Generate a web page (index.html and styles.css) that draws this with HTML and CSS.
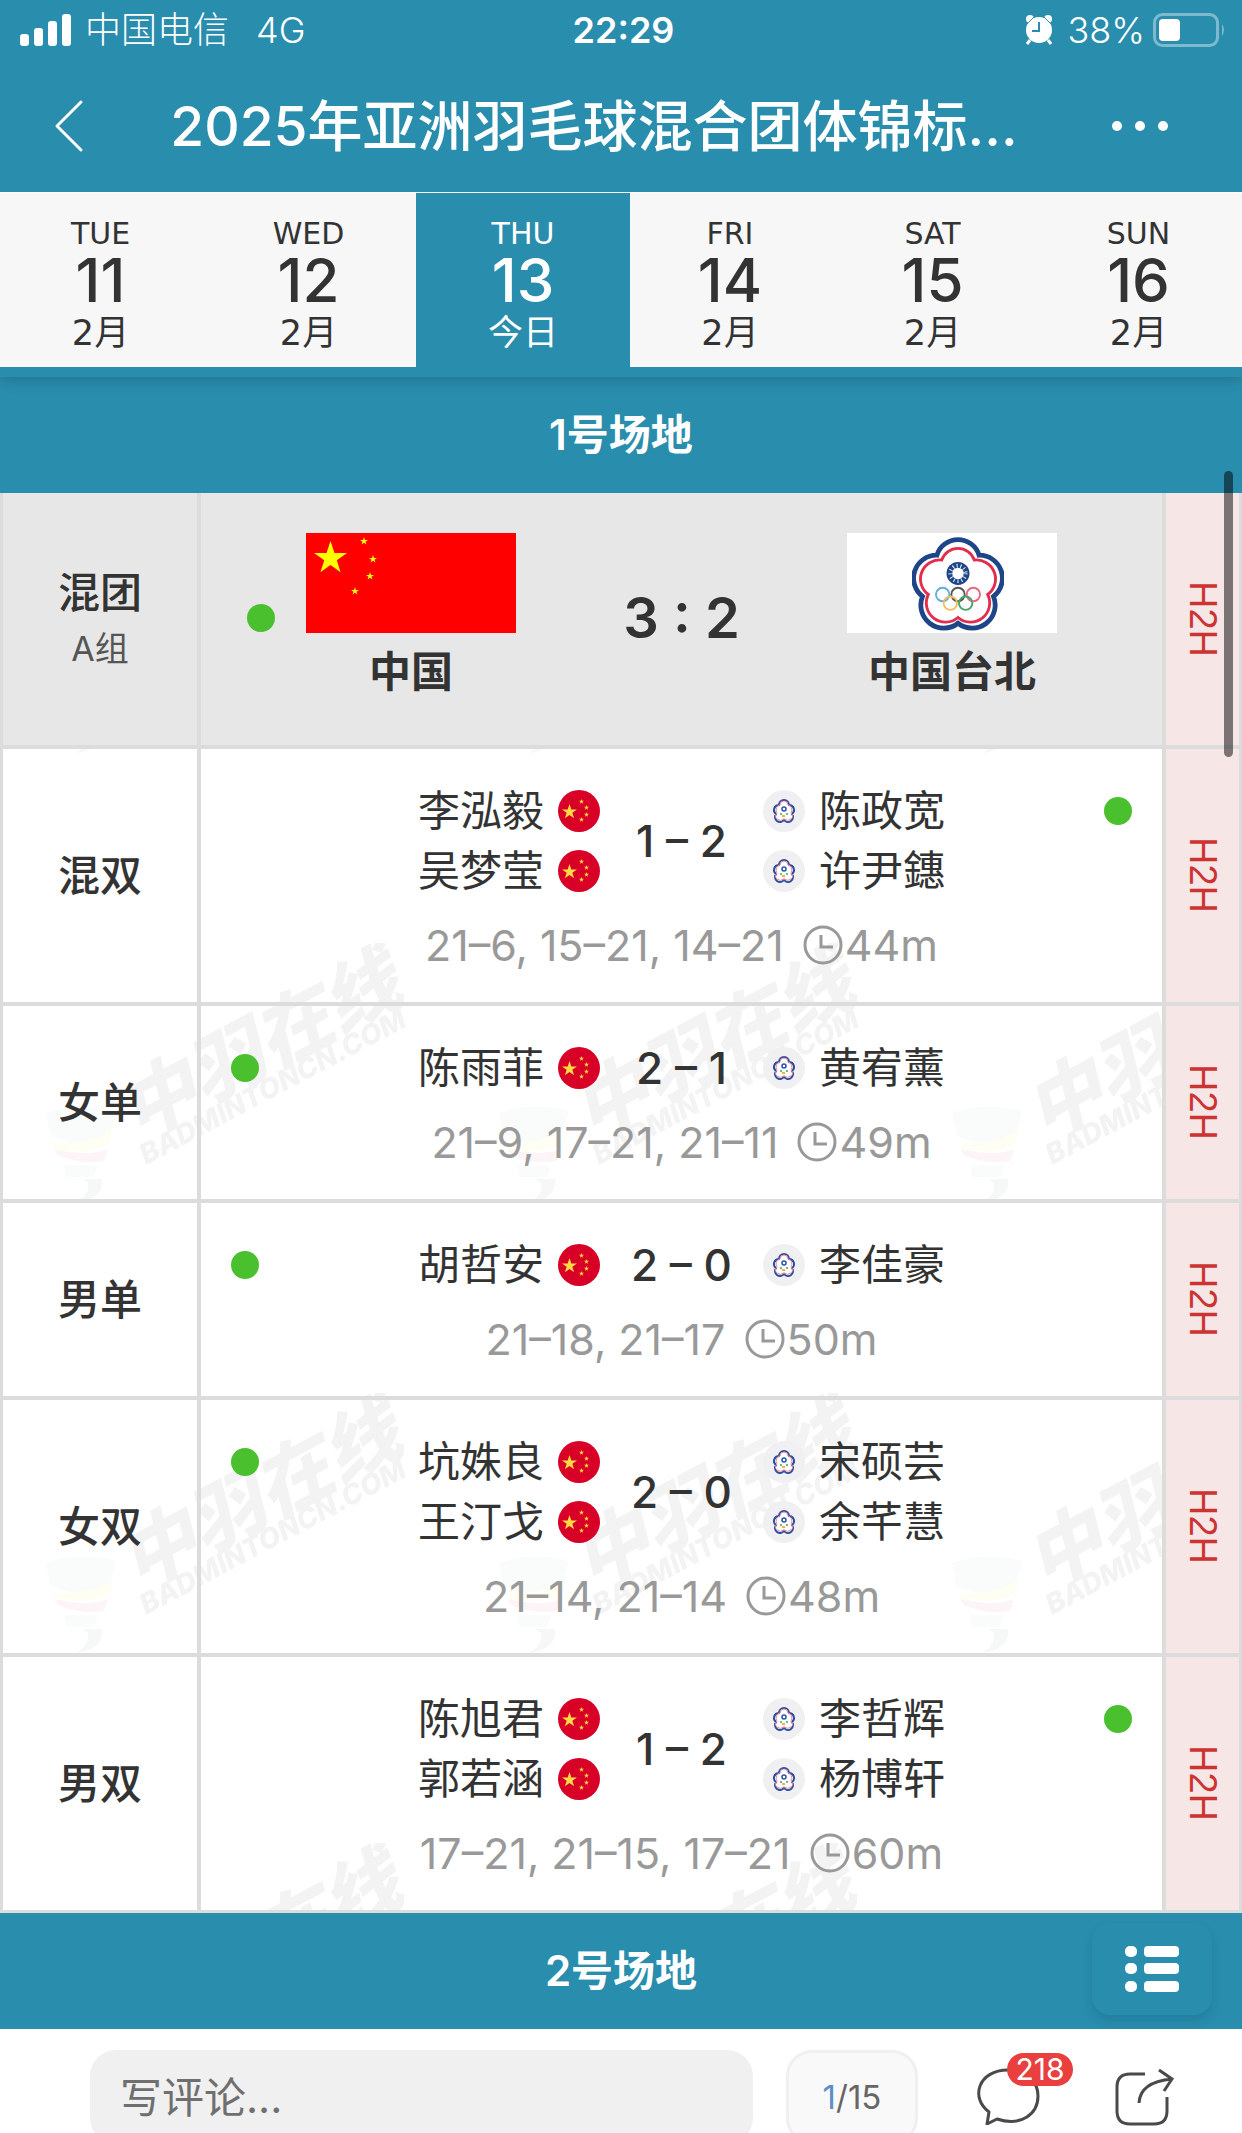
FILE: index.html
```html
<!DOCTYPE html>
<html lang="zh-CN">
<head>
<meta charset="utf-8">
<meta name="viewport" content="width=device-width, initial-scale=1">
<title>2025年亚洲羽毛球混合团体锦标...</title>
<link rel="stylesheet" href="styles.css">
</head>
<body>
<svg class="defs" aria-hidden="true">
  <symbol id="blossom" viewBox="0 0 96 100">
    <path d="M26 21A23 23 0 0 1 70 21A24 24 0 0 1 85 64A24 24 0 0 1 48 92A24 24 0 0 1 11 64A24 24 0 0 1 26 21Z" fill="#fff" stroke="#1d4587" stroke-width="5"/>
    <path d="M31 26A18 18 0 0 1 65 26A20 20 0 0 1 79 62A20 20 0 0 1 48 86A20 20 0 0 1 17 62A20 20 0 0 1 31 26Z" fill="none" stroke="#e22d4c" stroke-width="3"/>
    <circle cx="48" cy="40" r="9" fill="none" stroke="#1d4587" stroke-width="6"/>
    <circle cx="48" cy="40" r="8" fill="none" stroke="#fff" stroke-width="4" stroke-dasharray="1 3"/>
    <g fill="none" stroke-width="2">
      <circle cx="32" cy="62" r="7" stroke="#62aee0"/><circle cx="48" cy="62" r="7" stroke="#555"/><circle cx="64" cy="62" r="7" stroke="#e86880"/>
      <circle cx="40" cy="71" r="7" stroke="#f3bd62"/><circle cx="56" cy="71" r="7" stroke="#48a66b"/>
    </g>
  </symbol>
  <symbol id="star" viewBox="0 0 20 20"><path d="M10 0L12.4 7.2H20L13.8 11.7L16.1 19L10 14.5L3.9 19L6.2 11.7L0 7.2H7.6Z"/></symbol>
  <symbol id="cn" viewBox="0 0 42 42">
    <circle cx="21" cy="21" r="21" fill="#d80027"/>
    <g fill="#ffda44"><use href="#star" x="4" y="14" width="15" height="15"/><use href="#star" x="21" y="9" width="5" height="5"/><use href="#star" x="26" y="15" width="5" height="5"/><use href="#star" x="26" y="22" width="5" height="5"/><use href="#star" x="21" y="27" width="5" height="5"/></g>
  </symbol>
  <symbol id="tpe" viewBox="0 0 42 42">
    <circle cx="21" cy="21" r="21" fill="#f0f0f2"/>
    <path d="M16 15A5 5 0 0 1 26 15A5 5 0 0 1 29 24A5 5 0 0 1 21 30A5 5 0 0 1 13 24A5 5 0 0 1 16 15Z" fill="#fff" stroke="#2c4f9e" stroke-width="2"/>
    <path d="M17 15A4 4 0 0 1 25 15A4 5 0 0 1 28 23A5 4 0 0 1 21 29A5 4 0 0 1 14 23A4 5 0 0 1 17 15Z" fill="none" stroke="#f08a9f" stroke-width="1"/>
    <circle cx="21" cy="19" r="2" fill="none" stroke="#2456a8" stroke-width="1.5"/>
    <path d="M17 24h2M23 24h2" stroke="#4a9c67" stroke-width="1.5"/><path d="M19 26h3" stroke="#e6b93c" stroke-width="2"/>
  </symbol>
  <symbol id="clock" viewBox="0 0 40 40"><g fill="none" stroke="#999" stroke-width="3"><circle cx="20" cy="20" r="18"/><path d="M18 10V22H30"/></g></symbol>
</svg>

<div class="app">
  <header class="top">
    <div class="status">
      <div class="status-side">
        <svg width="52" height="32" viewBox="0 0 52 32" fill="#fff" aria-hidden="true"><rect y="20" width="9" height="12" rx="3"/><rect x="14" y="14" width="9" height="18" rx="3"/><rect x="28" y="7" width="9" height="25" rx="3"/><rect x="42" width="9" height="32" rx="3"/></svg>
        <span>中国电信</span><span class="network">4G</span>
      </div>
      <time class="clock">22:29</time>
      <div class="status-side status-end">
        <svg width="28" height="30" viewBox="0 0 28 30" aria-hidden="true"><g fill="#fff"><circle cx="14" cy="15" r="13"/><circle cx="5" cy="4" r="4"/><circle cx="23" cy="4" r="4"/></g><path d="M5 25L2 29M23 25L26 29" stroke="#fff" stroke-width="3"/><path d="M2 9L9 2M26 9L19 2" stroke="#298dad" stroke-width="1"/><path d="M14 7V16H7" fill="none" stroke="#298dad" stroke-width="2"/></svg>
        <span class="battery-level">38%</span>
        <svg width="74" height="34" viewBox="0 0 74 34" aria-hidden="true"><rect x="1.500" y="1.500" width="63" height="31" rx="8" fill="none" stroke="#fff" stroke-opacity=".4" stroke-width="3"/><rect x="6" y="6" width="21" height="22" rx="4" fill="#fff"/><path d="M69 11Q73 17 69 23Z" fill="#fff" fill-opacity=".4"/></svg>
      </div>
    </div>
    <div class="titlebar">
      <button class="icon-btn" aria-label="返回"><svg width="30" height="54" viewBox="0 0 30 54" fill="none" stroke="#fff" stroke-width="3" stroke-linecap="round" stroke-linejoin="round"><path d="M27 3L3 27L27 51"/></svg></button>
      <h1>2025年亚洲羽毛球混合团体锦标...</h1>
      <button class="icon-btn" aria-label="更多"><svg width="56" height="10" viewBox="0 0 56 10" fill="#fff"><circle cx="5" cy="5" r="5"/><circle cx="28" cy="5" r="5"/><circle cx="51" cy="5" r="5"/></svg></button>
    </div>
    <nav class="days" aria-label="日期">
      <a href="#d11"><span>TUE</span><b>11</b><span class="month">2月</span></a>
      <a href="#d12"><span>WED</span><b>12</b><span class="month">2月</span></a>
      <a href="#d13" class="active" aria-current="date"><span>THU</span><b>13</b><span class="month">今日</span></a>
      <a href="#d14"><span>FRI</span><b>14</b><span class="month">2月</span></a>
      <a href="#d15"><span>SAT</span><b>15</b><span class="month">2月</span></a>
      <a href="#d16"><span>SUN</span><b>16</b><span class="month">2月</span></a>
    </nav>
  </header>

  <main>
    <h2 class="court">1号场地</h2>
    <div class="schedule">
      <svg class="watermark" aria-hidden="true">
        <defs><pattern id="wm" width="453" height="450" patternUnits="userSpaceOnUse">
          <g fill="#f3f3f3">
            <text class="wm-cn" transform="translate(138 198) rotate(-28) skewX(-14)">中羽在线</text>
            <text class="wm-en" transform="translate(146 222) rotate(-28)">BADMINTONCN.COM</text>
          </g>
          <path d="M46 170Q80 158 116 168L108 198Q76 206 50 192Z" fill="#fafbfb"/>
          <path d="M52 200Q90 202 112 186L110 200Q90 212 56 206Z" fill="#fffef3"/>
          <path d="M54 206Q90 214 108 206L104 218Q80 222 58 212Z" fill="#fdf4f7"/>
          <path d="M64 222H98L94 234H66Z" fill="#f9fcfb"/>
          <path d="M82 236H102Q104 256 76 260Q90 252 88 240Z" fill="#f6f7f7"/>
        </pattern></defs>
        <rect width="100%" height="100%" fill="url(#wm)"/>
      </svg>
      <table>
        <colgroup><col class="col-event"><col><col class="col-h2h"></colgroup>
        <tr class="tie">
          <th scope="row">混团<small>A组</small></th>
          <td><div class="teams">
            <i class="dot"></i>
            <div class="team"><svg class="flag" viewBox="0 0 210 100" role="img" aria-label="中国国旗"><rect width="210" height="100" fill="#f00"/><g fill="#ff0"><use href="#star" x="8" y="8" width="33" height="33"/><use href="#star" x="54" y="4" width="8" height="8"/><use href="#star" x="63" y="22" width="8" height="8"/><use href="#star" x="60" y="39" width="8" height="8"/><use href="#star" x="45" y="54" width="8" height="8"/></g></svg><b>中国</b></div>
            <strong class="tie-score">3 : 2</strong>
            <div class="team"><svg class="flag" viewBox="0 0 210 100" role="img" aria-label="中华台北会旗"><rect width="210" height="100" fill="#fff"/><use href="#blossom" x="65" y="2" width="92" height="96"/></svg><b>中国台北</b></div>
          </div></td>
          <td class="h2h"><a href="#h2h-0">H2H</a></td>
        </tr>
        <tr>
          <th scope="row">混双</th>
          <td><div class="match">
            <div class="players home"><p>李泓毅<svg><use href="#cn"/></svg></p><p>吴梦莹<svg><use href="#cn"/></svg></p></div>
            <span class="score">1 – 2</span>
            <div class="players"><p><svg><use href="#tpe"/></svg>陈政宽</p><p><svg><use href="#tpe"/></svg>许尹鏸</p></div>
            <i class="dot right"></i>
          </div><p class="sets">21–6, 15–21, 14–21 <svg><use href="#clock"/></svg>44m</p></td>
          <td class="h2h"><a href="#h2h-1">H2H</a></td>
        </tr>
        <tr>
          <th scope="row">女单</th>
          <td><div class="match">
            <i class="dot"></i>
            <div class="players home"><p>陈雨菲<svg><use href="#cn"/></svg></p></div>
            <span class="score">2 – 1</span>
            <div class="players"><p><svg><use href="#tpe"/></svg>黄宥薰</p></div>
          </div><p class="sets">21–9, 17–21, 21–11 <svg><use href="#clock"/></svg>49m</p></td>
          <td class="h2h"><a href="#h2h-2">H2H</a></td>
        </tr>
        <tr>
          <th scope="row">男单</th>
          <td><div class="match">
            <i class="dot"></i>
            <div class="players home"><p>胡哲安<svg><use href="#cn"/></svg></p></div>
            <span class="score">2 – 0</span>
            <div class="players"><p><svg><use href="#tpe"/></svg>李佳豪</p></div>
          </div><p class="sets">21–18, 21–17 <svg><use href="#clock"/></svg>50m</p></td>
          <td class="h2h"><a href="#h2h-3">H2H</a></td>
        </tr>
        <tr>
          <th scope="row">女双</th>
          <td><div class="match">
            <i class="dot"></i>
            <div class="players home"><p>坑姝良<svg><use href="#cn"/></svg></p><p>王汀戈<svg><use href="#cn"/></svg></p></div>
            <span class="score">2 – 0</span>
            <div class="players"><p><svg><use href="#tpe"/></svg>宋硕芸</p><p><svg><use href="#tpe"/></svg>余芊慧</p></div>
          </div><p class="sets">21–14, 21–14 <svg><use href="#clock"/></svg>48m</p></td>
          <td class="h2h"><a href="#h2h-4">H2H</a></td>
        </tr>
        <tr>
          <th scope="row">男双</th>
          <td><div class="match">
            <div class="players home"><p>陈旭君<svg><use href="#cn"/></svg></p><p>郭若涵<svg><use href="#cn"/></svg></p></div>
            <span class="score">1 – 2</span>
            <div class="players"><p><svg><use href="#tpe"/></svg>李哲辉</p><p><svg><use href="#tpe"/></svg>杨博轩</p></div>
            <i class="dot right"></i>
          </div><p class="sets">17–21, 21–15, 17–21 <svg><use href="#clock"/></svg>60m</p></td>
          <td class="h2h"><a href="#h2h-5">H2H</a></td>
        </tr>
      </table>
    </div>
    <div class="court-wrap">
      <h2 class="court">2号场地</h2>
      <button class="list-btn" aria-label="目录"><svg width="54" height="46" viewBox="0 0 54 46" fill="#fff"><rect width="12" height="11" rx="5"/><rect y="17" width="12" height="11" rx="5"/><rect y="35" width="12" height="11" rx="5"/><rect x="19" width="35" height="11" rx="4"/><rect x="19" y="17" width="35" height="11" rx="4"/><rect x="19" y="35" width="35" height="11" rx="4"/></svg></button>
    </div>
    <div class="scrollbar"></div>
  </main>

  <footer>
    <input type="text" placeholder="写评论..." aria-label="写评论">
    <button class="pager"><span>1</span>/15</button>
    <button class="foot-icon comments" aria-label="评论"><svg width="64" height="58" viewBox="0 0 64 58" fill="none" stroke="#4a4a4a" stroke-width="3" stroke-linejoin="round"><path d="M13 45C-6 31 2 3 32 3C52 3 62 16 62 29C62 47 45 60 21 52L11 57Z"/></svg><span class="badge">218</span></button>
    <button class="foot-icon" aria-label="分享"><svg width="62" height="60" viewBox="0 0 62 60" fill="none" stroke="#4a4a4a" stroke-width="3"><path d="M31 7H16Q3 7 3 20V44Q3 57 16 57H40Q53 57 53 44V30"/><path d="M25 36Q26 15 58 12M45 3L58 12L50 24"/></svg></button>
  </footer>
</div>
</body>
</html>
```
FILE: styles.css
```css
* { box-sizing: border-box; }
body, h1, h2, p { margin: 0; }
body {
  font-family: Inter, "Noto Sans CJK SC", sans-serif;
  font-size: 42px;
  color: #333;
  background: #fff;
}
a { color: inherit; text-decoration: none; }
button { padding: 0; border: 0; background: none; font: inherit; color: inherit; }
svg { display: block; flex: none; }
.defs { position: absolute; width: 0; height: 0; }

.app { display: flex; flex-direction: column; height: 100vh; overflow: hidden; }

.top {
  position: relative;
  z-index: 1;
  flex: none;
  padding-bottom: 10px;
  background: #298dad;
  color: #fff;
  box-shadow: 0 2px 14px rgba(0, 0, 0, .2);
}
.status {
  display: grid;
  grid-template-columns: 1fr auto 1fr;
  align-items: center;
  height: 60px;
  padding: 0 15px 0 20px;
  font-size: 36px;
  line-height: 60px;
}
.status-side { display: flex; align-items: center; gap: 13px; font-weight: 300; }
.network { margin-left: 14px; }
.status-end { justify-content: flex-end; gap: 8px; }
.battery-level { margin-left: 6px; }
.clock { font-weight: 600; }
.titlebar {
  display: flex;
  align-items: center;
  justify-content: space-between;
  height: 132px;
  padding: 0 74px 0 54px;
}
.icon-btn { display: flex; align-items: center; width: 56px; height: 60px; }
h1 { flex: 1; margin-right: 34px; font-size: 55px; font-weight: 500; line-height: 60px; text-align: center; white-space: nowrap; }

.days {
  display: grid;
  grid-template-columns: 201fr 215fr 214fr 200fr 205fr 207fr;
  border-top: 1px solid #fff;
  background: #f7f7f7;
  color: #333;
}
.days a {
  display: flex;
  flex-direction: column;
  align-items: center;
  height: 174px;
  padding-top: 24px;
  font-family: "DejaVu Sans", "Noto Sans CJK SC", sans-serif;
  font-size: 30px;
  line-height: 34px;
}
.days b { font-family: Inter, sans-serif; font-size: 60px; font-weight: 500; line-height: 58px; }
.days .month { font-size: 35px; line-height: 48px; }
.days .active { background: #298dad; color: #fff; }

main { position: relative; flex: 1; min-height: 0; overflow: hidden; }
.court {
  background: #298dad;
  color: #fff;
  font-size: 42px;
  font-weight: 600;
  line-height: 116px;
  text-align: center;
}
.schedule { position: relative; }
.watermark { position: absolute; inset: 0; width: 100%; height: 100%; }
.wm-cn { font: 900 76px "Noto Sans CJK SC", sans-serif; }
.wm-en { font: italic 800 28px Inter, sans-serif; }

table { position: relative; width: 100%; border-spacing: 0; table-layout: fixed; }
.col-event { width: 201px; }
.col-h2h { width: 80px; }
th, td { padding: 0; border: 0 solid #dcdcdc; border-bottom-width: 4px; }
th { border-left-width: 3px; border-right-width: 4px; font-weight: 500; line-height: 60px; }
th small { display: block; font-size: 34px; font-weight: 400; line-height: 52px; color: #555; }
td { padding: 32px 0 27px; }
.h2h {
  padding: 0;
  border-left-width: 4px;
  border-right-width: 3px;
  background: #f6e6e6;
  color: #c33;
  font-family: "Liberation Sans", sans-serif;
  font-size: 38px;
}
.h2h a { display: block; margin: 0 auto; width: 40px; line-height: 40px; writing-mode: vertical-rl; }
.tie th, .tie td:not(.h2h) { background: #e7e7e7; }
.tie td:not(.h2h) { padding: 40px 0 43px; }
tr:last-child > * { border-bottom-width: 3px; }

.dot { width: 28px; height: 28px; border-radius: 50%; background: #4bc02f; }
.teams {
  display: grid;
  grid-template-columns: 1fr 210px 331px 210px 1fr;
  align-items: center;
}
.teams .dot { margin-left: 46px; }
.team { display: flex; flex-direction: column; align-items: center; gap: 9px; line-height: 60px; white-space: nowrap; }
.team b { font-weight: 600; }
.flag { width: 210px; height: 100px; }
.tie-score { font-size: 56px; font-weight: 600; text-align: center; }

.match {
  display: grid;
  grid-template-columns: 1fr auto 163px auto 1fr;
  align-items: center;
}
.match .dot { grid-column: 1; align-self: start; margin: 16px 30px; }
.match .dot.right { grid-column: 5; justify-self: end; }
.home { grid-column: 2; }
.players p { display: flex; align-items: center; gap: 14px; line-height: 60px; }
.players svg { width: 42px; height: 42px; }
.score { font-size: 44px; font-weight: 500; text-align: center; line-height: 60px; }
.sets {
  display: flex;
  justify-content: center;
  align-items: center;
  margin-top: 14px;
  font-size: 43px;
  line-height: 60px;
  color: #999;
  white-space: pre;
}
.sets svg { width: 40px; height: 40px; margin: 0 2px 0 7px; }

.court-wrap { position: relative; }
.list-btn {
  position: absolute;
  top: 10px;
  right: 30px;
  display: flex;
  align-items: center;
  justify-content: center;
  width: 120px;
  height: 92px;
  border-radius: 18px;
  background: #298dad;
  box-shadow: 0 6px 10px rgba(0, 50, 80, .15);
}
.scrollbar {
  position: absolute;
  top: 94px;
  right: 9px;
  width: 9px;
  height: 286px;
  border-radius: 5px;
  background: rgba(0, 0, 0, .5);
}

footer {
  position: relative;
  display: flex;
  flex: none;
  align-items: flex-start;
  height: 104px;
  padding: 21px 66px 0 90px;
  overflow: hidden;
  background: #fff;
}
input {
  flex: 1;
  min-width: 0;
  height: 94px;
  padding: 0 30px;
  border: 0;
  border-radius: 26px;
  background: #f0f0f0;
  font: inherit;
}
input::placeholder { color: #6f6f6f; opacity: 1; }
.pager {
  width: 132px;
  height: 94px;
  margin: 0 58px 0 33px;
  border: 3px solid #f0f0f0;
  border-radius: 26px;
  background: #f9f9f9;
  color: #666;
  font-size: 33px;
}
.pager span { color: #5b8fc9; }
.foot-icon { padding-top: 17px; }
.comments { position: relative; margin-right: 74px; }
.badge {
  position: absolute;
  top: 3px;
  left: 31px;
  width: 66px;
  border-radius: 17px;
  background: #e93f3f;
  color: #fff;
  font-size: 30px;
  line-height: 33px;
  text-align: center;
}
```
